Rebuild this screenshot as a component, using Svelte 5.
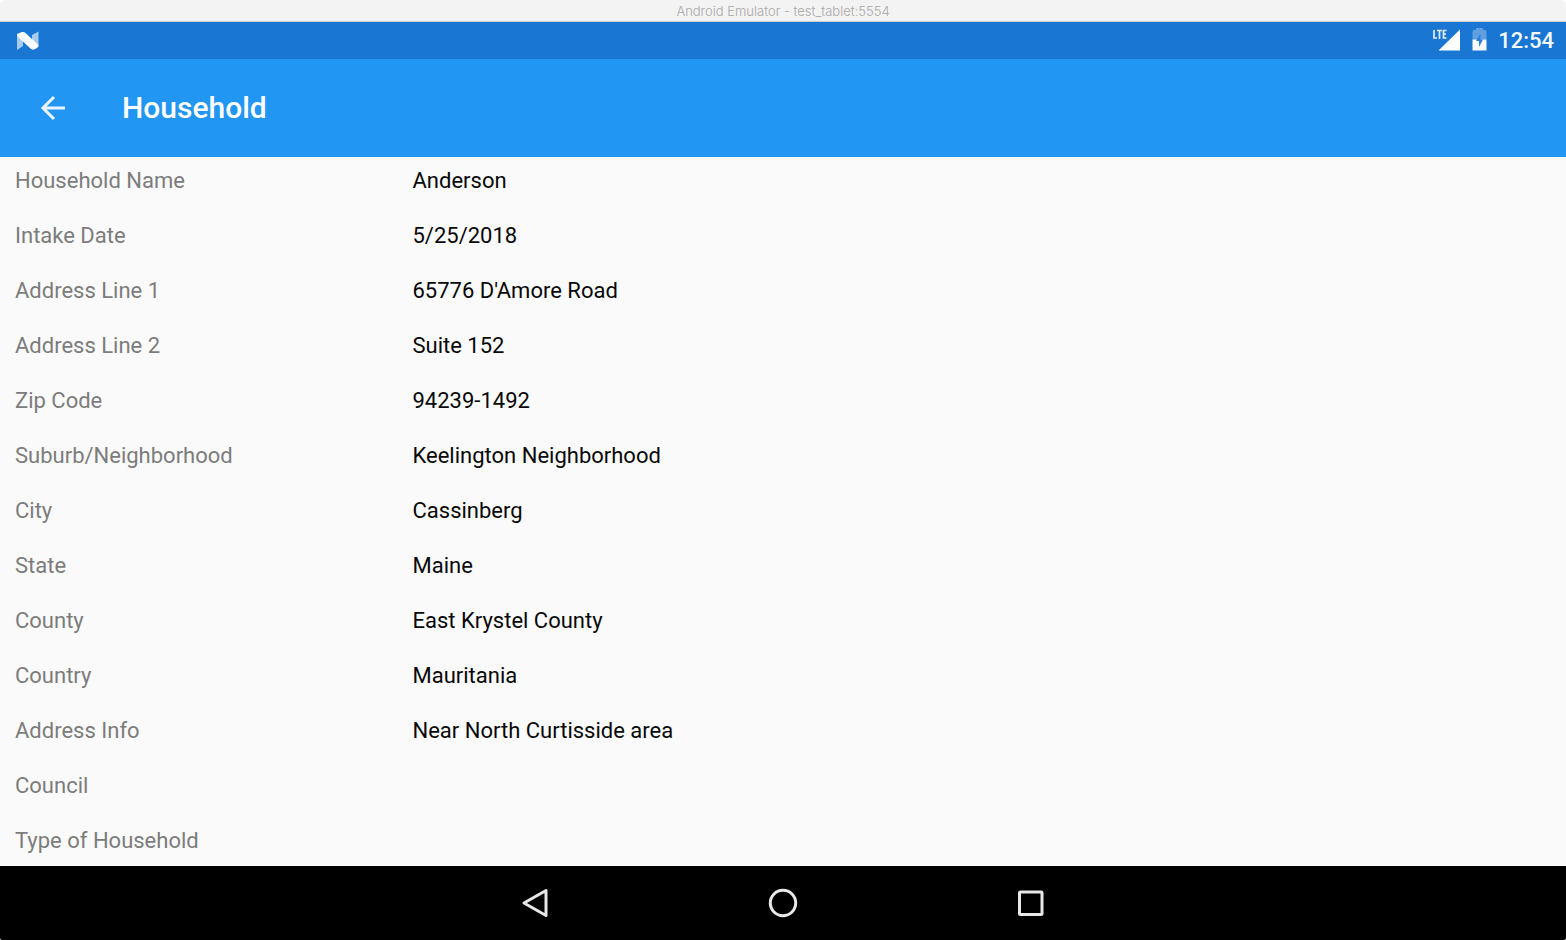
<script>
  const details = [
    ['Household Name', 'Anderson'],
    ['Intake Date', '5/25/2018'],
    ['Address Line 1', "65776 D'Amore Road"],
    ['Address Line 2', 'Suite 152'],
    ['Zip Code', '94239-1492'],
    ['Suburb/Neighborhood', 'Keelington Neighborhood'],
    ['City', 'Cassinberg'],
    ['State', 'Maine'],
    ['County', 'East Krystel County'],
    ['Country', 'Mauritania'],
    ['Address Info', 'Near North Curtisside area'],
    ['Council', ''],
    ['Type of Household', '']
  ];
</script>

<div class="window">
  <div class="caption">Android Emulator - test_tablet:5554</div>

  <div class="status">
    <svg class="n-logo" width="24" height="22" viewBox="0 0 24 22" aria-hidden="true">
      <path d="M1 4 L7 9 V16 L1 20 Z M16 5 L22.500 1.500 V17 L16 12 Z" fill="#a9cbee" />
      <path d="M1 4 L6 2 Q8 1.500 9.500 3 L22.500 15 Q22.500 17 21 18 L18 19.500 Q16 20 14.500 18.500 L1 6 Z" fill="#fff" />
    </svg>
    <div class="indicators">
      <svg class="signal" width="28" height="24" viewBox="0 0 28 24" aria-hidden="true">
        <path d="M28 0.500 V21.500 H6.500 Z" fill="#fff" />
        <path d="M2 1 V9 H5 M5 1.500 H10 M7.500 1.500 V10 M14.500 1.500 H11.500 V9 H14.500 M11.500 5 H14" fill="none" stroke="#e4effb" stroke-width="1.700" />
      </svg>
      <svg class="battery" width="15" height="24" viewBox="0 0 15 24" aria-hidden="true">
        <path d="M4 -1 H11 V1 H13 Q14.500 1 14.500 3 V10.500 H.5 V3 Q.5 1 2 1 H4 Z" fill="#609fe0" />
        <path d="M.5 10.500 H14.500 V21.500 H.5 Z" fill="#fff" />
        <path d="M8.500 4.500 L4 12 H7 V18 L11 10.500 H8.500 Z" fill="#2a80d8" />
      </svg>
      <time>12:54</time>
    </div>
  </div>

  <header>
    <button class="back" aria-label="Navigate up">
      <svg width="26" height="26" viewBox="0 0 26 26" aria-hidden="true">
        <path d="M25 13 H4 M14 2 L3 13 L14 24" fill="none" stroke="#e9f4fe" stroke-width="3" />
      </svg>
    </button>
    <h1>Household</h1>
  </header>

  <main>
    <dl>
      {#each details as [label, value]}
        <div class="row">
          <dt>{label}</dt>
          <dd>{value}</dd>
        </div>
      {/each}
    </dl>
  </main>

  <nav aria-label="System navigation">
    <button aria-label="Back">
      <svg width="30" height="30" viewBox="0 0 30 30" aria-hidden="true">
        <path d="M26 2.500 V27.500 L4 15 Z" fill="none" stroke="#e8e8e8" stroke-width="3" stroke-linejoin="round" />
      </svg>
    </button>
    <button aria-label="Home">
      <svg width="30" height="30" viewBox="0 0 30 30" aria-hidden="true">
        <circle cx="15" cy="15" r="12.700" fill="none" stroke="#e8e8e8" stroke-width="3" />
      </svg>
    </button>
    <button aria-label="Recent apps">
      <svg width="30" height="30" viewBox="0 0 30 30" aria-hidden="true">
        <rect x="3.500" y="4" width="22.500" height="22.500" rx="1" fill="none" stroke="#e8e8e8" stroke-width="3" />
      </svg>
    </button>
  </nav>
</div>

<style>
  :global(body) {
    margin: 0;
    background: #fff;
  }

  .window {
    display: flex;
    flex-direction: column;
    height: 100vh;
    overflow: hidden;
    border-radius: 6px 6px 2px 2px;
    background: #fafafa;
    font-family: Roboto, sans-serif;
  }

  .caption {
    box-sizing: border-box;
    flex: none;
    height: 22px;
    border-bottom: 1px solid #cfcfcf;
    background: #f3f3f3;
    color: #a8a8a8;
    font-family: Inter, sans-serif;
    font-size: 13px;
    font-weight: 300;
    line-height: 22px;
    text-align: center;
  }

  .status {
    display: flex;
    flex: none;
    align-items: center;
    justify-content: space-between;
    height: 37px;
    padding: 0 12px 0 16px;
    background: #1976d2;
    color: #f4f9fe;
  }

  .indicators {
    display: flex;
    align-items: center;
  }

  svg {
    overflow: visible;
  }

  .battery {
    margin: 0 11px 0 12px;
  }

  time {
    font-size: 22px;
    font-weight: 500;
    line-height: 26px;
  }

  header {
    display: flex;
    flex: none;
    align-items: center;
    gap: 44px;
    height: 98px;
    padding: 0 28px;
    background: #2196f3;
    color: #fff;
  }

  button {
    display: flex;
    align-items: center;
    justify-content: center;
    padding: 0;
    border: 0;
    background: none;
    cursor: pointer;
  }

  .back {
    width: 50px;
    height: 50px;
  }

  h1 {
    margin: 0;
    font-size: 30px;
    font-weight: 500;
    line-height: 38px;
  }

  main {
    flex: 1;
    min-height: 0;
    overflow: hidden;
  }

  dl {
    display: flex;
    flex-direction: column;
    gap: 29px;
    margin: 0;
    padding: 11px 15px;
  }

  .row {
    display: grid;
    grid-template-columns: 1fr 3fr;
    gap: 18px;
    font-size: 22px;
    line-height: 26px;
  }

  dt {
    color: #7c7c7c;
  }

  dd {
    margin: 0;
    color: #080808;
  }

  nav {
    display: grid;
    flex: none;
    grid-template-columns: repeat(3, 248px);
    justify-content: center;
    height: 74px;
    background: #000;
  }
</style>
